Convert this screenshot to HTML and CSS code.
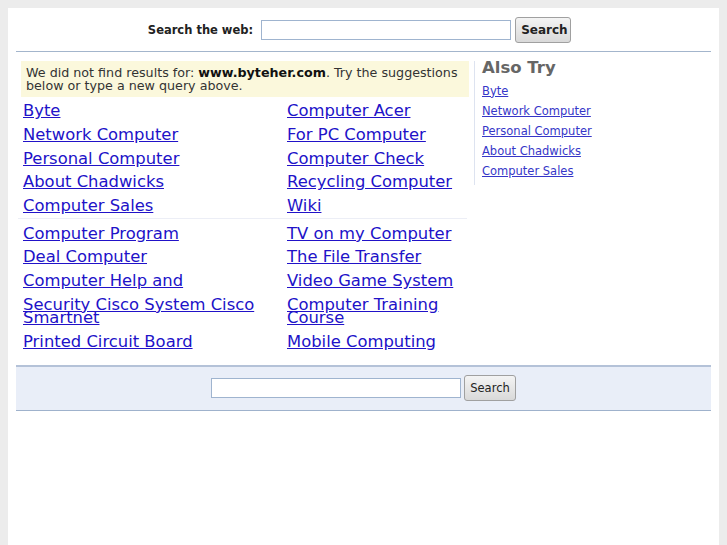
FILE: index.html
```html
<!DOCTYPE html>
<html>
<head>
<meta charset="utf-8">
<title>byteher.com</title>
<link rel="stylesheet" href="styles.css">
</head>
<body>
<div class="page">
  <div class="header">
    <form class="search-top">
      <label class="search-label">Search the web:</label>
      <input class="search-input" type="text">
      <button class="btn btn-bold" type="button">Search</button>
    </form>
  </div>
  <div class="main">
    <div class="results">
      <div class="notice">We did not find results for: <b>www.byteher.com</b>. Try the suggestions below or type a new query above.</div>
      <div class="links links-first">
        <a href="#">Byte</a><a href="#">Computer Acer</a>
        <a href="#">Network Computer</a><a href="#">For PC Computer</a>
        <a href="#">Personal Computer</a><a href="#">Computer Check</a>
        <a href="#">About Chadwicks</a><a href="#">Recycling Computer</a>
        <a href="#">Computer Sales</a><a href="#">Wiki</a>
      </div>
      <div class="sep"></div>
      <div class="links">
        <a href="#">Computer Program</a><a href="#">TV on my Computer</a>
        <a href="#">Deal Computer</a><a href="#">The File Transfer</a>
        <a href="#">Computer Help and</a><a href="#">Video Game System</a>
        <a href="#">Security Cisco System Cisco Smartnet</a><a href="#">Computer Training Course</a>
        <a href="#">Printed Circuit Board</a><a href="#">Mobile Computing</a>
      </div>
    </div>
    <div class="also">
      <div class="also-title">Also Try</div>
      <a href="#">Byte</a>
      <a href="#">Network Computer</a>
      <a href="#">Personal Computer</a>
      <a href="#">About Chadwicks</a>
      <a href="#">Computer Sales</a>
    </div>
  </div>
  <div class="bottom">
    <form class="search-bottom">
      <input class="search-input" type="text">
      <button class="btn" type="button">Search</button>
    </form>
  </div>
</div>
</body>
</html>
```
FILE: styles.css
```css
html, body {
  margin: 0;
  padding: 0;
}
body {
  background: #ececec;
  padding: 8px 8px 0 8px;
  font-family: "DejaVu Sans", Verdana, sans-serif;
  color: #333;
}
.page {
  background: #fff;
  padding: 0 8px;
  min-height: 540px;
}
.header {
  border-bottom: 1px solid #a3b5cc;
  padding: 9px 0 8px 0;
}
.search-top, .search-bottom {
  display: flex;
  align-items: center;
  justify-content: center;
  margin: 0;
}
.search-top {
  padding-right: 8px;
}
.search-label {
  font-size: 11.5px;
  font-weight: bold;
  color: #222;
  margin-right: 8px;
}
.search-input {
  width: 250px;
  height: 20px;
  box-sizing: border-box;
  border: 1px solid #9fb4cf;
  padding: 0 3px;
  margin: 0;
  background: #fff;
}
.btn {
  margin-left: 4px;
  height: 26px;
  padding: 0 5px;
  box-sizing: border-box;
  border: 1px solid #a0a0a0;
  border-radius: 3px;
  background: linear-gradient(#f4f4f4, #d9d9d9);
  font-family: "DejaVu Sans", Verdana, sans-serif;
  font-size: 12px;
  color: #222;
}
.btn-bold {
  font-weight: bold;
  width: 56px;
}
.search-bottom .btn {
  width: 52px;
  font-size: 11.5px;
  padding: 0;
  margin-left: 3px;
}
.main {
  display: flex;
  padding: 9px 0 12px 5px;
  align-items: flex-start;
}
.results {
  width: 448px;
}
.notice {
  background: #fbf8dc;
  font-size: 12.7px;
  line-height: 13px;
  padding: 5px 5px 5px 5px;
  color: #333;
}
.notice b {
  color: #111;
}
.links {
  display: grid;
  grid-template-columns: 264px 184px;
  padding-left: 2px;
}
.links-first {
  margin-top: 2px;
}
.links a {
  display: block;
  font-size: 16.4px;
  line-height: 13px;
  padding: 5.35px 0;
  color: #2112c8;
  text-decoration: underline;
}
.sep {
  height: 1px;
  background: #eceef6;
  margin: 1px 2px 2px -3px;
}
.also {
  margin-left: 5px;
  border-left: 1px solid #dde3f0;
  padding-left: 7px;
  padding-bottom: 4px;
  display: flex;
  flex-direction: column;
}
.also-title {
  font-size: 16.5px;
  font-weight: bold;
  color: #666;
  line-height: 14px;
  padding-bottom: 6px;
}
.also a {
  font-size: 11.5px;
  line-height: 13px;
  padding: 3.5px 0;
  color: #3636c8;
  text-decoration: underline;
}
.bottom {
  background: #e9eef8;
  border-top: 2px solid #b4c2d8;
  border-bottom: 1px solid #9fb2cc;
  padding: 8px 0 9px 0;
}
```
